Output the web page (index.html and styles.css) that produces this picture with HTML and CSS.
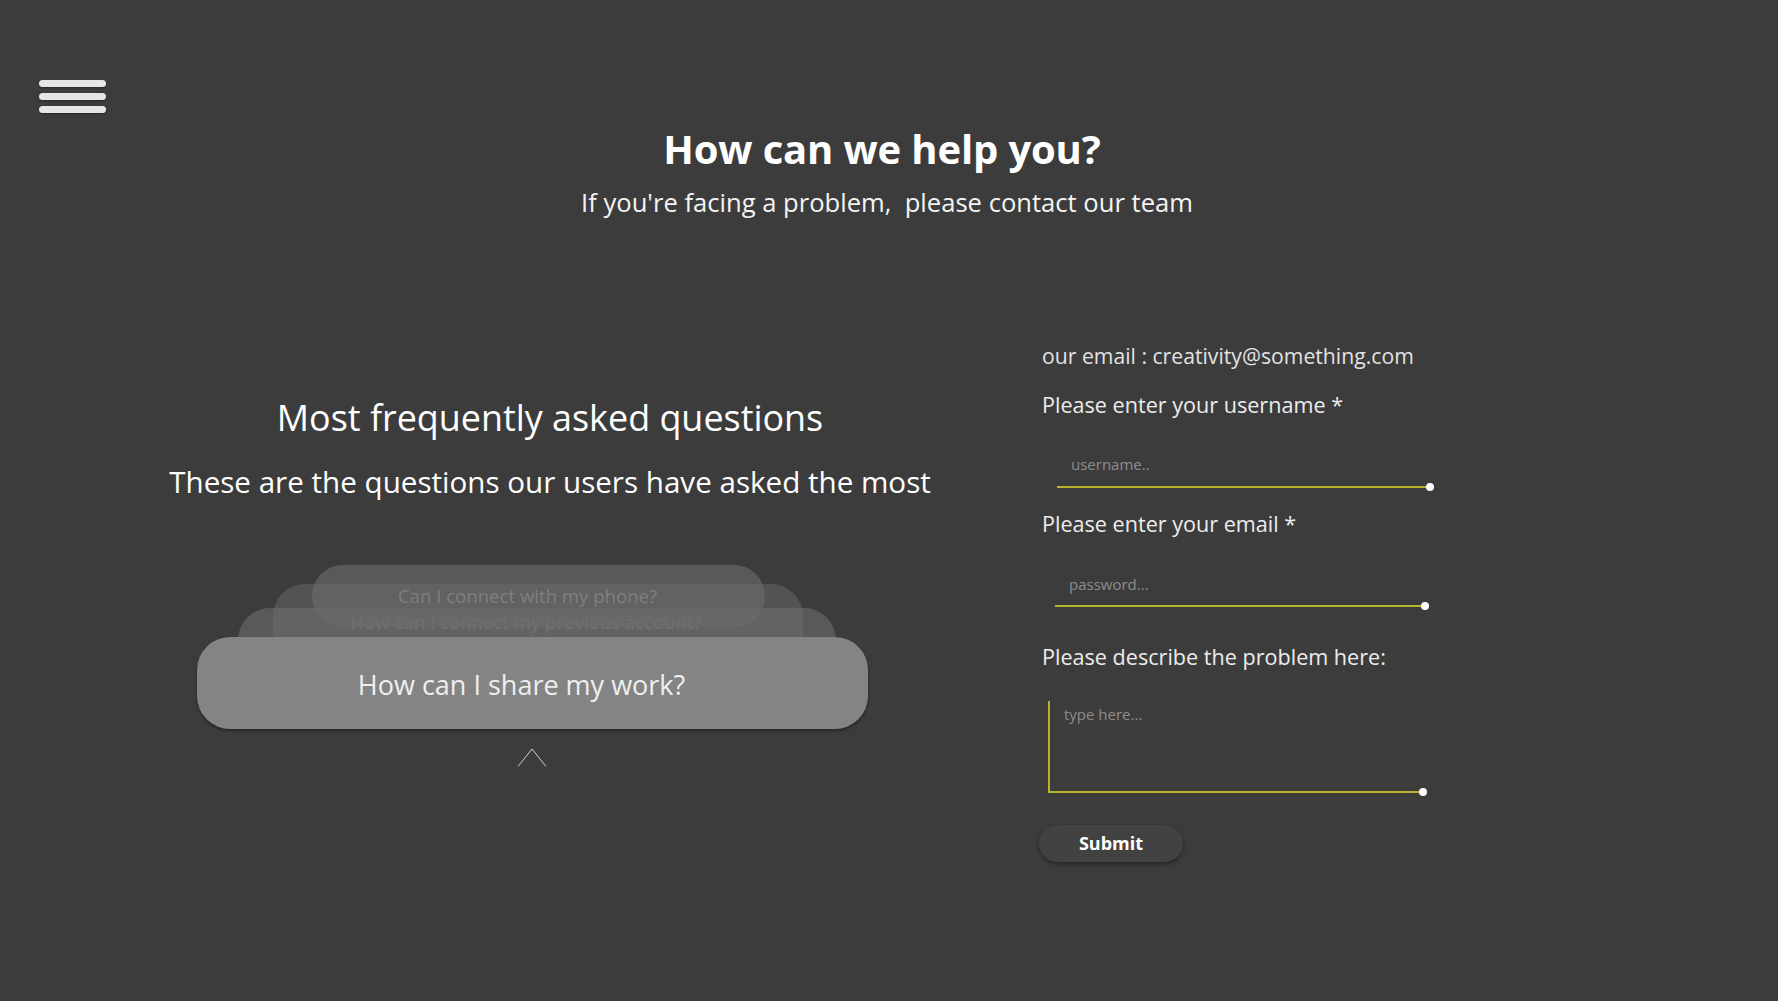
FILE: index.html
```html
<!DOCTYPE html>
<html lang="en">
<head>
<meta charset="utf-8">
<title>How can we help you?</title>
<link rel="stylesheet" href="styles.css">
</head>
<body>
<div class="page">
  <header class="header">
    <button class="burger" aria-label="Menu">
      <span class="bar"></span>
      <span class="bar"></span>
      <span class="bar"></span>
    </button>
    <h1 class="title">How can we help you?</h1>
    <p class="subtitle">If you're facing a problem,&nbsp; please contact our team</p>
  </header>

  <main class="main">
    <section class="faq">
      <div class="faq-head">
        <h2 class="faq-title">Most frequently asked questions</h2>
        <p class="faq-sub">These are the questions our users have asked the most</p>
      </div>
      <div class="stack">
        <div class="card card-2"><span>How can I connect my previous account?</span></div>
        <div class="card card-3"></div>
        <div class="card card-4"><span>Can I connect with my phone?</span></div>
        <div class="card card-main">How can I share my work?</div>
      </div>
      <div class="chev">
        <svg width="30" height="19" viewBox="0 0 30 19"><polyline points="1,18.5 15,1 29,18.5" fill="none" stroke="#d0d0d0" stroke-width="1"/></svg>
      </div>
    </section>

    <section class="contact">
      <p class="email">our email : creativity@something.com</p>
      <label class="label">Please enter your username *</label>
      <div class="field field-user"><input class="input" type="text" placeholder="username.."></div>
      <label class="label label-email">Please enter your email *</label>
      <div class="field field-pass"><input class="input" type="text" placeholder="password..."></div>
      <label class="label label-desc">Please describe the problem here:</label>
      <div class="field field-area"><textarea class="area" placeholder="type here..."></textarea></div>
      <button class="submit">Submit</button>
    </section>
  </main>
</div>
</body>
</html>
```

FILE: styles.css
```css
* { box-sizing: border-box; }
html, body {
  margin: 0;
  padding: 0;
  background: #3c3c3c;
}
body {
  font-family: "Open Sans", "Noto Sans", sans-serif;
  color: #f2f2f2;
  width: 1778px;
  height: 1001px;
  overflow: hidden;
}
.header {
  padding: 80px 0 0 0;
  text-align: center;
}
.burger {
  display: flex;
  flex-direction: column;
  gap: 6px;
  margin: 0 0 0 39px;
  padding: 0;
  border: 0;
  background: none;
}
.bar {
  display: block;
  width: 67px;
  height: 7px;
  border-radius: 4px;
  background: #e6e6e6;
  box-shadow: 0 1px 2px rgba(0,0,0,.35);
}
.title {
  margin: 12px 0 0 0;
  padding-right: 14px;
  font-size: 40px;
  line-height: 48px;
  font-weight: 700;
  color: #ffffff;
  letter-spacing: -0.15px;
}
.subtitle {
  margin: 14px 0 0 0;
  padding-right: 4px;
  font-size: 25.6px;
  line-height: 32px;
  color: #f4f4f4;
}
.main {
  display: grid;
  grid-template-columns: 1042px 1fr;
  align-items: start;
}
.faq {
  padding-top: 177px;
}
.faq-head {
  padding-left: 58px;
  text-align: center;
}
.faq-title {
  margin: 0;
  font-size: 35.9px;
  line-height: 44px;
  font-weight: 400;
  color: #ffffff;
}
.faq-sub {
  margin: 23px 0 0 0;
  font-size: 29.6px;
  line-height: 38px;
  color: #ffffff;
}
.stack {
  position: relative;
  margin: 64px 0 0 197px;
  width: 671px;
  height: 164px;
}
.card {
  position: absolute;
  border-radius: 32px;
  text-align: center;
  color: #7c7c7c;
  font-size: 18.6px;
}
.card-2 {
  left: 41px;
  top: 43px;
  width: 598px;
  height: 70px;
  background: #595959;
  padding: 1px 22px 0 0;
  line-height: 26px;
  z-index: 1;
}
.card-2 span { color: #7a7a7a; }
.card-3 {
  left: 76px;
  top: 19px;
  width: 530px;
  height: 80px;
  background: rgba(110,110,110,.45);
  z-index: 2;
}
.card-4 {
  left: 115px;
  top: 0;
  width: 453px;
  height: 62px;
  background: rgba(108,108,108,.62);
  line-height: 62px;
  padding-right: 22px;
  z-index: 3;
}
.card-4 span { color: #7f7f7f; }
.card-main {
  left: 0;
  top: 72px;
  width: 671px;
  height: 92px;
  background: #848484;
  border-radius: 33px;
  color: #efefef;
  font-size: 27px;
  line-height: 96px;
  padding-right: 22px;
  box-shadow: 0 2px 3px rgba(0,0,0,.35);
  z-index: 4;
}
.chev {
  margin: 19px 0 0 517px;
  width: 30px;
  height: 19px;
}
.chev svg { display: block; }

.contact {
  padding: 123px 0 0 0;
  display: flex;
  flex-direction: column;
  align-items: flex-start;
}
.email {
  margin: 0;
  font-size: 21.2px;
  line-height: 28px;
  color: #e2e2e2;
}
.label {
  display: block;
  margin-top: 21px;
  font-size: 21.6px;
  line-height: 28px;
  color: #ececec;
}
.label-email { margin-top: 22px; }
.label-desc { margin-top: 36px; }
.field {
  position: relative;
}
.field::after {
  content: "";
  position: absolute;
  right: -4px;
  bottom: -3px;
  width: 8px;
  height: 8px;
  border-radius: 50%;
  background: #ffffff;
}
.field-user {
  margin: 31px 0 0 15px;
  width: 373px;
}
.field-pass {
  margin: 31px 0 0 13px;
  width: 370px;
}
.input {
  display: block;
  width: 100%;
  height: 38px;
  padding: 4px 0 12px 14px;
  border: 0;
  border-bottom: 2px solid #b8b22e;
  background: transparent;
  color: #eee;
  font-family: "Open Sans", "Noto Sans", sans-serif;
  font-size: 15px;
  line-height: 20px;
  outline: none;
}
.field-pass .input { padding-top: 5px; padding-bottom: 11px; }
.input::placeholder, .area::placeholder {
  color: #8c8c8c;
  opacity: 1;
}
.field-area {
  margin: 30px 0 0 6px;
  width: 375px;
}
.area {
  display: block;
  width: 100%;
  height: 92px;
  padding: 3px 0 0 14px;
  border: 0;
  border-left: 2px solid #b8b22e;
  border-bottom: 2px solid #b8b22e;
  background: transparent;
  color: #eee;
  font-family: "Open Sans", "Noto Sans", sans-serif;
  font-size: 15px;
  line-height: 20px;
  resize: none;
  outline: none;
}
.submit {
  margin: 32px 0 0 -3px;
  width: 144px;
  height: 37px;
  border: 0;
  border-radius: 19px;
  background: #424242;
  box-shadow: 0 2px 4px rgba(0,0,0,.4);
  color: #ffffff;
  font-family: "Open Sans", "Noto Sans", sans-serif;
  font-weight: 700;
  font-size: 18px;
  line-height: 37px;
  padding: 0;
}
```
